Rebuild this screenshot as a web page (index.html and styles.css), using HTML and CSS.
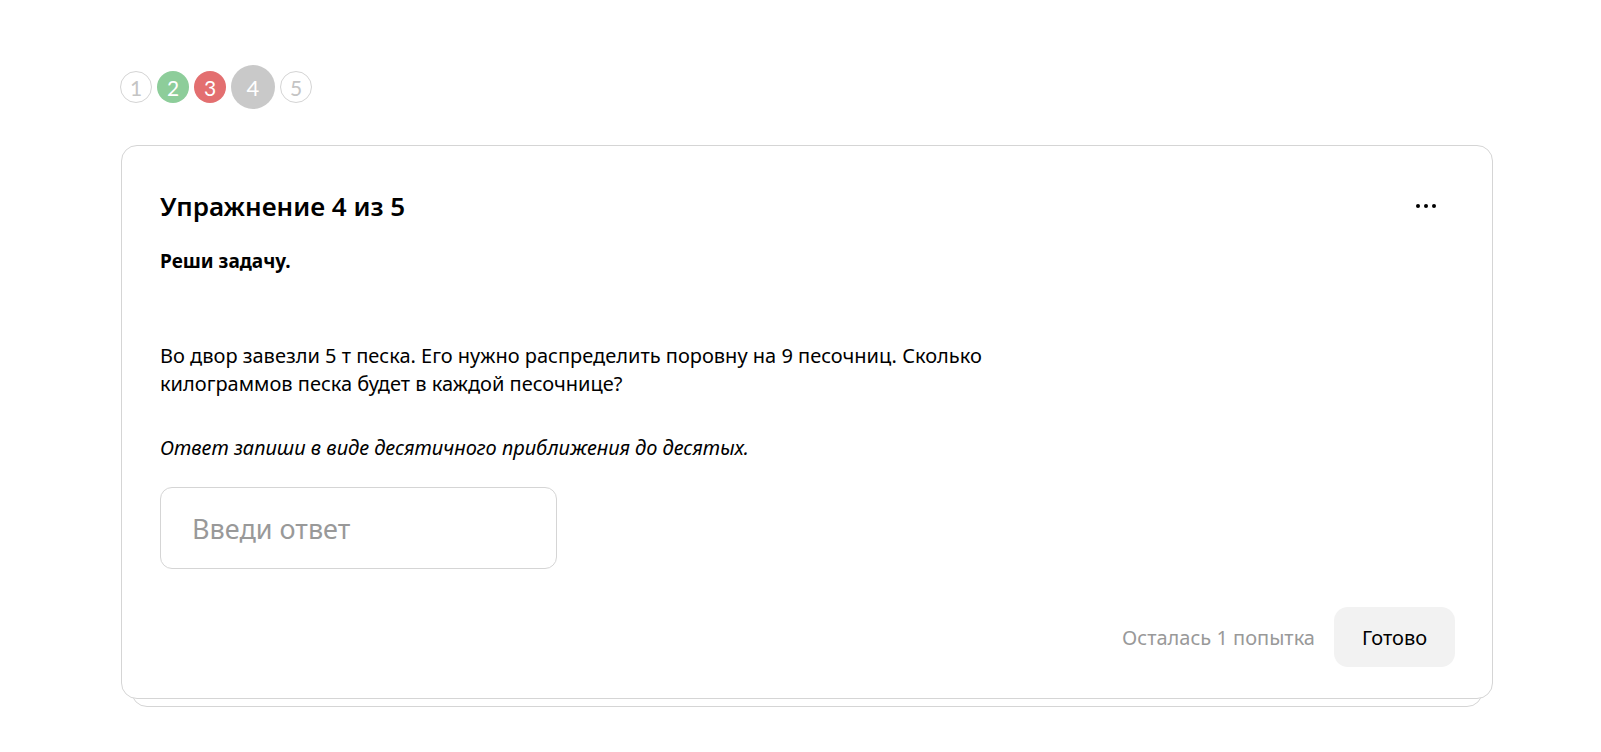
FILE: index.html
```html
<!DOCTYPE html>
<html lang="ru">
<head>
<meta charset="utf-8">
<title>Упражнение 4 из 5</title>
<link rel="stylesheet" href="styles.css">
</head>
<body>
<div class="page">
  <nav class="steps">
    <span class="step step-empty">1</span>
    <span class="step step-ok">2</span>
    <span class="step step-bad">3</span>
    <span class="step step-current">4</span>
    <span class="step step-empty">5</span>
  </nav>
  <div class="card-stack">
    <section class="card">
      <header class="card-head">
        <h1 class="card-title">Упражнение 4 из 5</h1>
        <button class="more" type="button" aria-label="Ещё">
          <svg width="20" height="4" viewBox="0 0 20 4"><circle cx="2" cy="2" r="2"/><circle cx="10" cy="2" r="2"/><circle cx="18" cy="2" r="2"/></svg>
        </button>
      </header>
      <p class="task-lead">Реши задачу.</p>
      <p class="task-text">Во двор завезли 5 т песка. Его нужно распределить поровну на 9 песочниц. Сколько килограммов песка будет в каждой песочнице?</p>
      <p class="task-hint">Ответ запиши в виде десятичного приближения до десятых.</p>
      <input class="answer" type="text" placeholder="Введи ответ">
      <footer class="card-foot">
        <span class="attempts">Осталась 1 попытка</span>
        <button class="done" type="button">Готово</button>
      </footer>
    </section>
  </div>
</div>
</body>
</html>
```

FILE: styles.css
```css
* { box-sizing: border-box; }
html { background: #fff; }
html, body { margin: 0; padding: 0; }
body {
  font-family: "Noto Sans", "Open Sans", sans-serif;
  color: #000;
}
.page {
  padding: 65px 108px 0 120px;
}
.steps {
  display: flex;
  align-items: center;
  gap: 5px;
  height: 44px;
}
.step {
  width: 32px;
  height: 32px;
  border-radius: 50%;
  display: flex;
  align-items: center;
  justify-content: center;
  font-family: "Lato", sans-serif;
  font-weight: 400;
  font-size: 21px;
  color: #fff;
}
.step-empty {
  border: 1px solid #d4d4d4;
  color: #c4c4c4;
}
.step-ok { background: #8dcd9a; }
.step-bad { background: #e36f70; }
.step-current {
  width: 44px;
  height: 44px;
  background: #c9c9c9;
  font-size: 22px;
}
.card-stack {
  position: relative;
  margin-top: 36px;
  margin-left: 1px;
  width: 1372px;
  padding-bottom: 8px;
}
.card-stack::before {
  content: "";
  position: absolute;
  left: 10px;
  right: 10px;
  bottom: 0;
  height: 40px;
  border: 1px solid #d5d5d5;
  border-radius: 16px;
  background: #fff;
}
.card {
  position: relative;
  z-index: 1;
  border: 1px solid #d5d5d5;
  border-radius: 16px;
  background: #fff;
  padding: 44px 37px 31px 38px;
}
.card-head {
  display: flex;
  align-items: center;
  justify-content: space-between;
}
.card-title {
  margin: 0;
  font-size: 26px;
  line-height: 32px;
  font-weight: 600;
}
.more {
  width: 40px;
  height: 32px;
  margin-right: 9px;
  border: none;
  background: transparent;
  padding: 0;
  display: flex;
  align-items: center;
  justify-content: center;
}
.more svg { fill: #000; }
.task-lead {
  margin: 27px 0 0;
  font-size: 19px;
  line-height: 24px;
  font-weight: 700;
}
.task-text {
  margin: 69px 0 0;
  max-width: 880px;
  font-size: 20px;
  line-height: 28px;
}
.task-hint {
  margin: 36px 0 0;
  font-size: 20px;
  line-height: 28px;
  font-style: italic;
}
.answer {
  display: block;
  margin-top: 25px;
  width: 397px;
  height: 82px;
  border: 1px solid #d5d5d5;
  border-radius: 12px;
  padding: 0 31px;
  font-family: inherit;
  font-size: 27px;
  color: #000;
  outline: none;
}
.answer::placeholder { color: #999; }
.card-foot {
  margin-top: 38px;
  display: flex;
  justify-content: flex-end;
  align-items: center;
  gap: 19px;
}
.attempts {
  font-size: 20px;
  color: #999;
}
.done {
  width: 121px;
  height: 60px;
  border: none;
  border-radius: 14px;
  background: #f2f2f2;
  font-family: inherit;
  font-size: 20px;
  color: #000;
}
```
